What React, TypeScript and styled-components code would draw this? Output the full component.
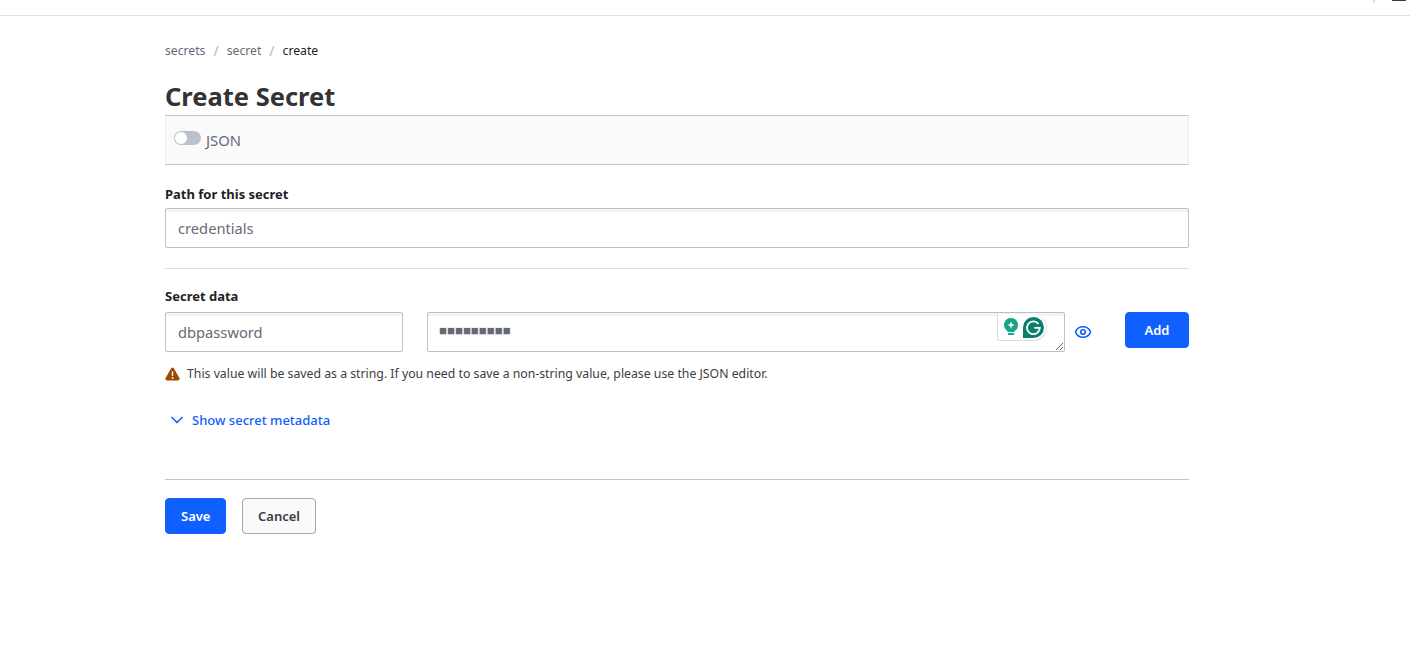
import React from "react";
import styled, { createGlobalStyle } from "styled-components";
import { ChevronDown, Eye } from "lucide-react";

const GlobalStyle = createGlobalStyle`
  html, body {
    margin: 0;
    background: #fff;
    font-family: "Noto Sans", "Open Sans", Arial, sans-serif;
    color: #1f2124;
  }
  * { box-sizing: border-box; }
`;

const TopBar = styled.header`
  height: 16px;
  border-bottom: 1px solid #dfe0e2;
  display: flex;
  justify-content: flex-end;
  align-items: flex-start;
  gap: 17px;
  padding-right: 4px;
`;

const TopTick = styled.span`
  width: 2px;
  height: 3px;
  background: #cfe0fb;
`;

const TopMark = styled.span`
  width: 14px;
  height: 1px;
  background: #3b3b3f;
`;

const Main = styled.main`
  width: 1024px;
  margin-left: 165px;
`;

const Crumbs = styled.nav`
  display: flex;
  align-items: center;
  height: 18px;
  margin-top: 25px;
  font-size: 12.2px;
  color: #656a76;
`;

const Crumb = styled.span<{ $current?: boolean }>`
  color: ${(p) => (p.$current ? "#1f2124" : "#656a76")};
`;

const Slash = styled.span`
  margin: 0 8px;
  color: #b5b8bf;
  font-size: 14px;
`;

const Title = styled.h1`
  margin: 18px 0 0;
  font-size: 25.5px;
  line-height: 38px;
  font-weight: 700;
  color: #333;
`;

const JsonBar = styled.div`
  height: 50px;
  display: flex;
  align-items: center;
  padding: 0 8px;
  gap: 5px;
  background: #fafafb;
  border: 1px solid #ececf1;
  border-top-color: #c2c5d0;
  border-bottom-color: #c2c5d0;
`;

const Toggle = styled.span`
  position: relative;
  display: block;
  width: 27px;
  height: 14px;
  margin-top: -4px;
  border-radius: 7px;
  background: #bac1cc;

  &::after {
    content: "";
    position: absolute;
    left: 1px;
    top: 1px;
    width: 12px;
    height: 12px;
    border-radius: 50%;
    background: #fff;
  }
`;

const JsonLabel = styled.span`
  font-size: 14.8px;
  color: #656a76;
`;

const Field = styled.section<{ $top: number }>`
  margin-top: ${(p) => p.$top}px;
`;

const Label = styled.label<{ $gap: number }>`
  display: block;
  font-size: 13px;
  line-height: 16px;
  font-weight: 700;
  color: #1f2124;
  margin-bottom: ${(p) => p.$gap}px;
`;

const TextInput = styled.input<{ $width?: number }>`
  display: block;
  width: ${(p) => (p.$width ? `${p.$width}px` : "100%")};
  height: 40px;
  padding: 0 12px;
  font: 14.7px "Noto Sans", "Open Sans", Arial, sans-serif;
  color: #656a76;
  background: #fff;
  border: 1px solid #bac1cc;
  border-radius: 2px;
  box-shadow: inset 0 4px 1px -1px #f1f2f3;
  outline: none;
`;

const Divider = styled.hr<{ $strong?: boolean }>`
  margin: ${(p) => (p.$strong ? "49px" : "20px")} 0 0;
  border: 0;
  height: 1px;
  background: ${(p) => (p.$strong ? "#c2c5cb" : "#dfe0e3")};
`;

const SecretRow = styled.div`
  display: flex;
  align-items: flex-start;
`;

const SecretBox = styled.div`
  position: relative;
  width: 638px;
  height: 40px;
  margin-left: 24px;
`;

const SecretArea = styled.textarea`
  display: block;
  width: 100%;
  height: 40px;
  padding: 7px 11px;
  font: 13.2px/20px "Noto Sans", "Open Sans", Arial, sans-serif;
  color: #656a76;
  background: #fff;
  border: 1px solid #bac1cc;
  border-radius: 2px;
  box-shadow: inset 0 4px 1px -1px #f1f2f3;
  outline: none;
  resize: vertical;
  -webkit-text-security: square;
`;

const Grammarly = styled.div`
  position: absolute;
  top: 2px;
  right: 18px;
  width: 50px;
  height: 27px;
  display: flex;
  align-items: center;
  gap: 4px;
  padding-left: 5px;
  background: #fff;
  border: 1px solid #d9dce0;
  border-top: 0;
  border-radius: 0 14px 14px 2px;
`;

const EyeButton = styled.button`
  width: 18px;
  height: 18px;
  margin: 11px 0 0 9px;
  padding: 0;
  border: 0;
  background: none;
  color: #1060ff;
  display: flex;
`;

const Button = styled.button<{ $ghost?: boolean }>`
  height: 36px;
  padding: 0 ${(p) => (p.$ghost ? "14.5px" : "15px")};
  font: 600 13px "Noto Sans", "Open Sans", Arial, sans-serif;
  border-radius: 4px;
  color: ${(p) => (p.$ghost ? "#3b3d45" : "#fff")};
  background: ${(p) => (p.$ghost ? "#fafafa" : "#1060ff")};
  border: 1px solid ${(p) => (p.$ghost ? "#a8a9ad" : "#1060ff")};
  box-shadow: ${(p) => (p.$ghost ? "0 1px 1px rgba(0,0,0,0.08)" : "none")};
`;

const AddButton = styled(Button)`
  width: 64px;
  margin-left: 33px;
`;

const Hint = styled.p`
  display: flex;
  align-items: center;
  gap: 7px;
  margin: 13px 0 0;
  font-size: 12.28px;
  line-height: 18px;
  color: #3b3d45;
`;

const MetaToggle = styled.div`
  display: flex;
  align-items: center;
  gap: 5px;
  margin: 27px 0 0 2px;
  font-size: 13px;
  line-height: 18px;
  font-weight: 500;
  color: #1060ff;
`;

const Actions = styled.div`
  display: flex;
  gap: 16px;
  margin-top: 18px;
`;

const WarningIcon = () => (
  <svg width="15" height="14" viewBox="0 0 15 14" aria-hidden="true">
    <path
      d="M6.2 1.2c.6-1 2-1 2.6 0l5.6 9.9c.6 1-.1 2.3-1.3 2.3H1.9C.7 13.4 0 12.1.6 11.1z"
      fill="#9e4b00"
    />
    <rect x="6.8" y="4.2" width="1.4" height="4.8" rx=".6" fill="#fff" />
    <circle cx="7.5" cy="10.9" r=".9" fill="#fff" />
  </svg>
);

const BulbIcon = () => (
  <svg width="16" height="20" viewBox="0 0 16 20" aria-hidden="true">
    <path
      d="M8 1a7 7 0 0 1 4.2 12.6c-.6.5-.9 1-.9 1.4H4.7c0-.4-.3-.9-.9-1.4A7 7 0 0 1 8 1z"
      fill="#15a58c"
    />
    <rect x="4.8" y="16" width="6.4" height="2" rx="1" fill="#15a58c" />
    <path d="M8 4.5l1 2.6 2.6 1-2.6 1-1 2.6-1-2.6-2.6-1 2.6-1z" fill="#fff" />
  </svg>
);

const GrammarlyIcon = () => (
  <svg width="21" height="21" viewBox="0 0 23 23" aria-hidden="true">
    <path d="M11.5 0a11.5 11.5 0 1 1 0 23H0V11.5A11.5 11.5 0 0 1 11.5 0z" fill="#0b7f6d" />
    <path
      d="M17 7.6a7 7 0 1 0 1.4 4.4h-6"
      fill="none"
      stroke="#fff"
      strokeWidth="2"
    />
  </svg>
);

export default function App() {
  return (
    <>
      <GlobalStyle />
      <TopBar>
        <TopTick />
        <TopMark />
      </TopBar>
      <Main>
        <Crumbs>
          <Crumb>secrets</Crumb>
          <Slash>/</Slash>
          <Crumb>secret</Crumb>
          <Slash>/</Slash>
          <Crumb $current>create</Crumb>
        </Crumbs>
        <Title>Create Secret</Title>
        <JsonBar>
          <Toggle />
          <JsonLabel>JSON</JsonLabel>
        </JsonBar>
        <Field $top={21}>
          <Label $gap={6}>Path for this secret</Label>
          <TextInput defaultValue="credentials" />
        </Field>
        <Divider />
        <Field $top={19}>
          <Label $gap={8}>Secret data</Label>
          <SecretRow>
            <TextInput $width={238} defaultValue="dbpassword" />
            <SecretBox>
              <SecretArea readOnly defaultValue="secret123" />
              <Grammarly>
                <BulbIcon />
                <GrammarlyIcon />
              </Grammarly>
            </SecretBox>
            <EyeButton aria-label="Show value">
              <Eye size={18} strokeWidth={2.2} />
            </EyeButton>
            <AddButton>Add</AddButton>
          </SecretRow>
          <Hint>
            <WarningIcon />
            This value will be saved as a string. If you need to save a non-string value, please use the JSON editor.
          </Hint>
        </Field>
        <MetaToggle>
          <ChevronDown size={20} strokeWidth={2} />
          Show secret metadata
        </MetaToggle>
        <Divider $strong />
        <Actions>
          <Button>Save</Button>
          <Button $ghost>Cancel</Button>
        </Actions>
      </Main>
    </>
  );
}
